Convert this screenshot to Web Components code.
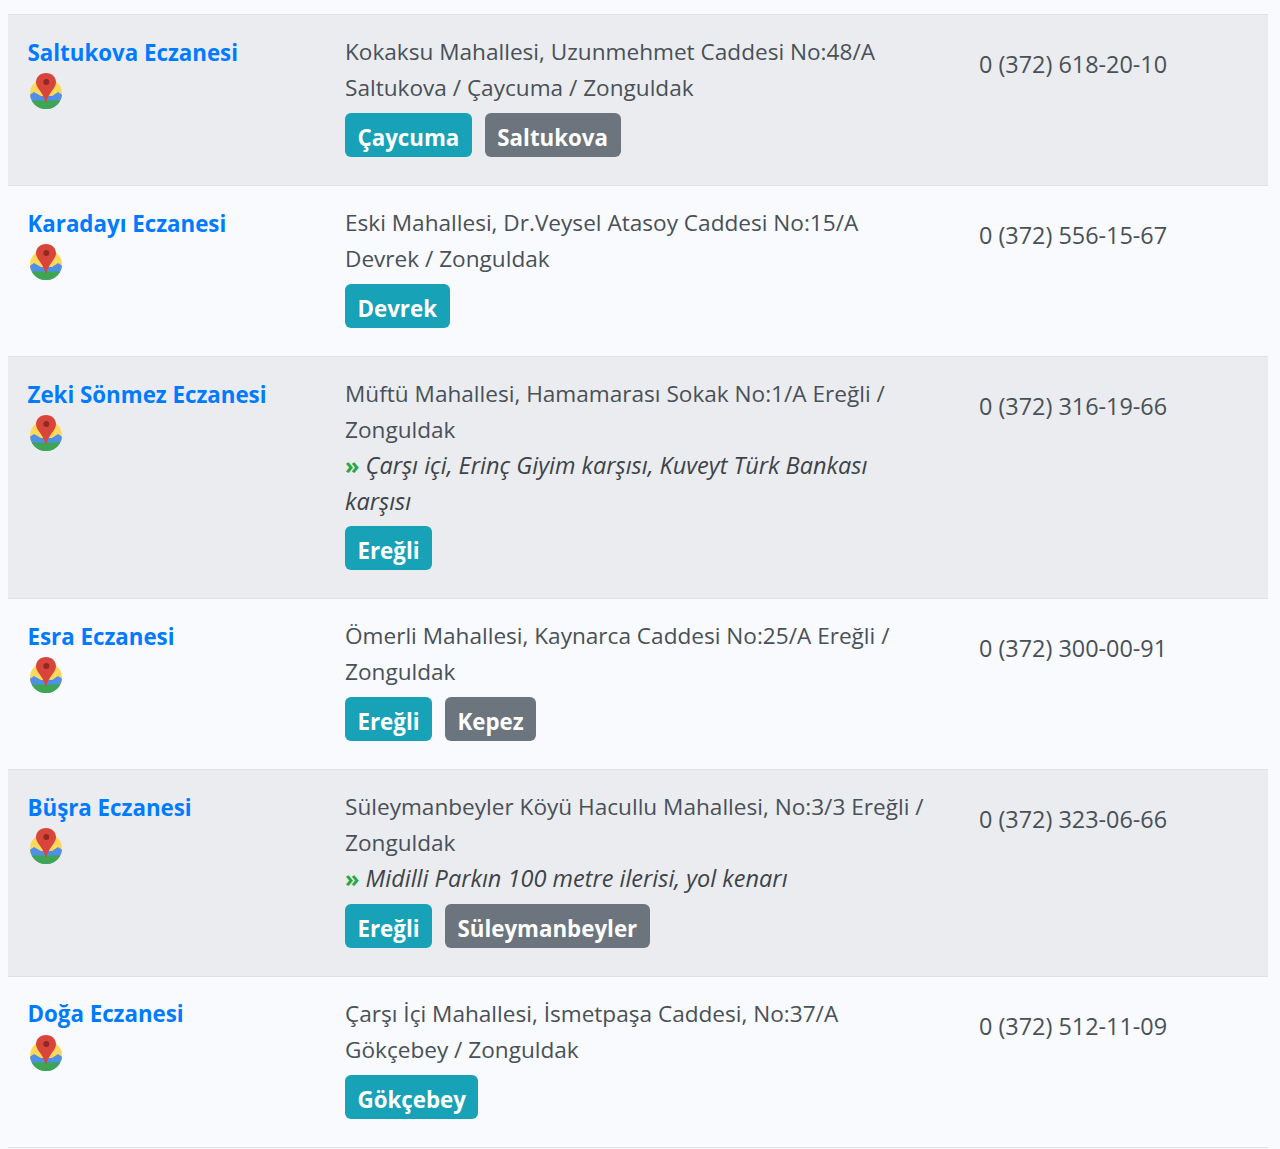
<!DOCTYPE html>
<html lang="tr">
<head>
<meta charset="utf-8">
<title>Eczaneler</title>
<style>
html, body { margin: 0; background: #f8fafd; }
body { padding: 14px 12px 0 8px; font-family: "Open Sans", "Noto Sans", sans-serif; color: #495057; }
</style>
</head>
<body>
<pharmacy-table>
  <pharmacy-row name="Saltukova Eczanesi" phone="0 (372) 618-20-10">
    Kokaksu Mahallesi, Uzunmehmet Caddesi No:48/A Saltukova / Çaycuma / Zonguldak
    <area-tag slot="tags" kind="info">Çaycuma</area-tag>
    <area-tag slot="tags">Saltukova</area-tag>
  </pharmacy-row>
  <pharmacy-row name="Karadayı Eczanesi" phone="0 (372) 556-15-67">
    Eski Mahallesi, Dr.Veysel Atasoy Caddesi No:15/A Devrek / Zonguldak
    <area-tag slot="tags" kind="info">Devrek</area-tag>
  </pharmacy-row>
  <pharmacy-row name="Zeki Sönmez Eczanesi" phone="0 (372) 316-19-66" note="Çarşı içi, Erinç Giyim karşısı, Kuveyt Türk Bankası karşısı">
    Müftü Mahallesi, Hamamarası Sokak No:1/A Ereğli / Zonguldak
    <area-tag slot="tags" kind="info">Ereğli</area-tag>
  </pharmacy-row>
  <pharmacy-row name="Esra Eczanesi" phone="0 (372) 300-00-91">
    Ömerli Mahallesi, Kaynarca Caddesi No:25/A Ereğli / Zonguldak
    <area-tag slot="tags" kind="info">Ereğli</area-tag>
    <area-tag slot="tags">Kepez</area-tag>
  </pharmacy-row>
  <pharmacy-row name="Büşra Eczanesi" phone="0 (372) 323-06-66" note="Midilli Parkın 100 metre ilerisi, yol kenarı">
    Süleymanbeyler Köyü Hacullu Mahallesi, No:3/3 Ereğli / Zonguldak
    <area-tag slot="tags" kind="info">Ereğli</area-tag>
    <area-tag slot="tags">Süleymanbeyler</area-tag>
  </pharmacy-row>
  <pharmacy-row name="Doğa Eczanesi" phone="0 (372) 512-11-09">
    Çarşı İçi Mahallesi, İsmetpaşa Caddesi, No:37/A Gökçebey / Zonguldak
    <area-tag slot="tags" kind="info">Gökçebey</area-tag>
  </pharmacy-row>
</pharmacy-table>

<script>
const mapIcon = `
<svg viewBox="0 0 36 38" width="36" height="38" aria-hidden="true">
  <defs><clipPath id="disc"><ellipse cx="18" cy="21.5" rx="16" ry="15.5"/></clipPath></defs>
  <g clip-path="url(#disc)">
    <rect width="36" height="38" fill="#fdd85d"/>
    <path d="M0 24 L6 20 L13 24 L24 24 L30 20 L36 24 V38 H0 Z" fill="#4f8fe6"/>
    <path d="M0 28.5 H36 V38 H0 Z" fill="#3ea653"/>
  </g>
  <path d="M18 1 C12 1 8 5.2 8 10.3 C8 16.5 15.3 20 18 31 C20.7 20 28 16.5 28 10.3 C28 5.2 24 1 18 1 Z" fill="#d9453a"/>
  <circle cx="18.3" cy="10" r="3" fill="#8e2a22"/>
</svg>`;

class PharmacyTable extends HTMLElement {
  constructor() {
    super();
    const shadow = this.attachShadow({ mode: "open" });
    shadow.innerHTML = `
      <style>
        :host { display: block; border-top: 1px solid #dee2e6; }
        ::slotted(pharmacy-row:nth-child(odd)) { background: #eaecef; }
      </style>
      <slot></slot>`;
  }
}

class PharmacyRow extends HTMLElement {
  constructor() {
    super();
    const shadow = this.attachShadow({ mode: "open" });
    const note = this.getAttribute("note");
    shadow.innerHTML = `
      <style>
        :host {
          display: grid;
          grid-template-columns: 317px 634px 309px;
          border-bottom: 1px solid #dee2e6;
          font-size: 22.6px;
          line-height: 36px;
          box-sizing: border-box;
        }
        .cell { padding: 19px 20px 28px; }
        .name { padding: 19.5px 20px 27.5px 19.5px; }
        .name a { display: block; color: #007bff; font-weight: 700; font-size: 22.3px; text-decoration: none; }
        .map { display: block; height: 38px; margin-top: 1.5px; }
        .address { padding-right: 29px; }
        .note { font-style: italic; font-size: 23.5px; line-height: 35.6px; color: #3d4349; }
        .note b { color: #28a745; font-style: normal; }
        .tags { display: flex; gap: 13px; margin-top: 7px; }
        .phone { padding-top: 31px; font-size: 23.4px; }
      </style>
      <div class="cell name">
        <a href="#">${this.getAttribute("name")}</a>
        <span class="map">${mapIcon}</span>
      </div>
      <div class="cell address">
        <div><slot></slot></div>
        ${note ? `<div class="note"><b>»</b> ${note}</div>` : ""}
        <div class="tags"><slot name="tags"></slot></div>
      </div>
      <div class="cell phone">${this.getAttribute("phone")}</div>`;
  }
}

class AreaTag extends HTMLElement {
  constructor() {
    super();
    const shadow = this.attachShadow({ mode: "open" });
    shadow.innerHTML = `
      <style>
        :host {
          display: block;
          height: 44px;
          padding: 0 12.5px;
          border-radius: 6px;
          background: #6c757d;
          color: #fff;
          font-weight: 700;
          font-size: 22.3px;
          line-height: 50px;
          box-sizing: border-box;
        }
        :host([kind="info"]) { background: #17a2b8; }
      </style>
      <slot></slot>`;
  }
}

customElements.define("pharmacy-table", PharmacyTable);
customElements.define("pharmacy-row", PharmacyRow);
customElements.define("area-tag", AreaTag);
</script>
</body>
</html>
